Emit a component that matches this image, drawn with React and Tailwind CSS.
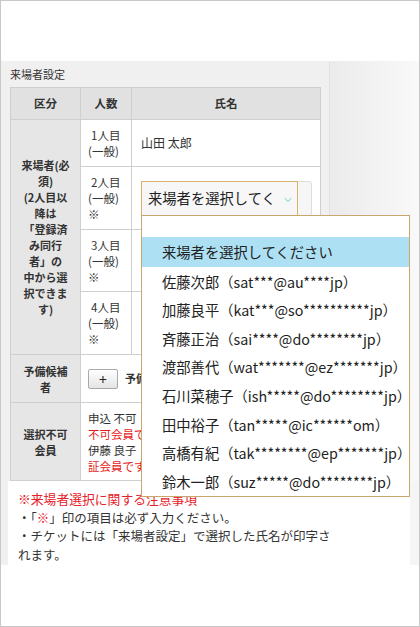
import { ChevronDown } from "lucide-react"

const jp = "font-['Noto_Sans_CJK_JP','Noto_Sans',sans-serif]"

const visitors = [
  "佐藤次郎（sat***@au****jp）",
  "加藤良平（kat***@so**********jp）",
  "斉藤正治（sai****@do********jp）",
  "渡部善代（wat*******@ez*******jp）",
  "石川菜穂子（ish*****@do********jp）",
  "田中裕子（tan*****@ic******om）",
  "高橋有紀（tak********@ep*******jp）",
  "鈴木一郎（suz*****@do********jp）",
]

const cell = "border-r border-b border-[#cfcfcf]"
const headCell = `${cell} bg-[#e1e1e1] flex items-center justify-center font-bold text-[11.5px]`
const sideCell = `${cell} bg-[#e6e6e6] flex items-center justify-center text-center font-bold text-[11px] leading-[16px]`

// select box inside a row; only the open one gets the gold focus frame
function SelectBox({ open }) {
  return (
    <div className="relative h-[35px] w-[171px] rounded-[3px] border border-[#dedede] bg-[#f6f6f6]">
      {open && (
        <div className="absolute -left-px -top-px flex h-[35px] w-[157px] items-center overflow-hidden border border-[#d9b36c] bg-[#f7f7f7] pl-[6px]">
          <span className="whitespace-nowrap text-[14.3px] text-[#222]">来場者を選択してく</span>
          <ChevronDown className="absolute right-[3px] top-[12px] text-[#5bbfd0]" size={12} strokeWidth={1.8} />
        </div>
      )}
    </div>
  )
}

function CountCell({ num, required }) {
  return (
    <div className={`${cell} flex flex-col justify-center bg-white pl-[7px] text-[11.5px] leading-[16px]`}>
      <span className="pl-[3px]">{num}人目</span>
      <span>(一般)</span>
      {required && <span>※</span>}
    </div>
  )
}

export default function App() {
  return (
    <div className={`${jp} relative h-[627px] w-[420px] overflow-hidden border border-[#c8c8c8] bg-white text-[#333]`}>
      <div className="h-[60px] bg-white" />

      <div className="bg-[#f0f0f0]">
        <div className="flex">
          {/* left panel: label + table */}
          <div className="w-[329px] border-r border-[#e2e2e2] pl-[9px]">
            <div className="flex h-[26px] items-center text-[11px]">来場者設定</div>
            <div className="grid w-[311px] grid-cols-[70px_51px_189px] grid-rows-[32px_47px_63px_62px_63px_48px_78px] border-l border-t border-[#cfcfcf]">
              <div className={headCell}>区分</div>
              <div className={headCell}>人数</div>
              <div className={headCell}>氏名</div>

              <div className={`${sideCell} row-span-4`}>
                <p>
                  来場者(必<br />須)<br />(2人目以<br />降は<br />「登録済<br />み同行<br />者」の<br />中から選<br />択できま<br />す)
                </p>
              </div>
              <CountCell num={1} />
              <div className={`${cell} flex items-center bg-white pl-[9px] text-[12px]`}>山田 太郎</div>

              <CountCell num={2} required />
              <div className={`${cell} flex items-center bg-white pl-[9px]`}>
                <SelectBox open />
              </div>

              <CountCell num={3} required />
              <div className={`${cell} flex items-center bg-white pl-[9px]`}>
                <SelectBox />
              </div>

              <CountCell num={4} required />
              <div className={`${cell} flex items-center bg-white pl-[9px]`}>
                <SelectBox />
              </div>

              <div className={sideCell}>
                <p>予備候補<br />者</p>
              </div>
              <div className={`${cell} col-span-2 flex items-center bg-white pl-[7px]`}>
                <button className="flex h-[20px] w-[30px] items-center justify-center rounded-[2px] border border-[#a9a9a9] bg-gradient-to-b from-white to-[#e4e4e4] text-[14px] leading-none text-[#222]">
                  +
                </button>
                <span className="ml-[7px] text-[11px] font-bold">予備候補者を追加</span>
              </div>

              <div className={sideCell}>
                <p>選択不可<br />会員</p>
              </div>
              <div className={`${cell} col-span-2 flex flex-col justify-center overflow-hidden bg-white pl-[7px] text-[11.5px] leading-[16px]`}>
                <span className="whitespace-nowrap">申込 不可（mou****@do****jp）</span>
                <span className="whitespace-nowrap text-[#e51c1c]">不可会員です</span>
                <span className="whitespace-nowrap">伊藤 良子（ito****@ez****jp）</span>
                <span className="whitespace-nowrap text-[#e51c1c]">証会員です</span>
              </div>
            </div>
          </div>
          <div className="flex-1 bg-gradient-to-r from-[#ebebeb] to-[#f9f9f9]" />
        </div>

        {/* notes */}
        <div className="flex pl-[7px]">
          <div className="h-[84px] w-[402px] bg-white pl-[10px] pt-[9px]">
            <div className="w-[322px] text-[12.5px] leading-[18.5px]">
              <p className="text-[12.8px] text-[#e8202a]">※来場者選択に関する注意事項</p>
              <p>・「<span className="text-[#e8202a]">※</span>」印の項目は必ず入力ください。</p>
              <p>・チケットには「来場者設定」で選択した氏名が印字されます。</p>
            </div>
          </div>
          <div className="flex-1 bg-[#f5f5f5]" />
        </div>
      </div>

      {/* open dropdown list */}
      <div className="absolute left-[140px] top-[214px] w-[269px] border border-[#c9a66b] bg-white text-[14.3px] text-[#222]">
        <div className="h-[21px]" />
        <div className="flex h-[30px] items-center bg-[#aee0f4] pl-[20px]">来場者を選択してください</div>
        {visitors.map((name) => (
          <div key={name} className="flex h-[28.6px] items-center whitespace-nowrap pl-[20px]">
            {name}
          </div>
        ))}
      </div>
    </div>
  )
}
